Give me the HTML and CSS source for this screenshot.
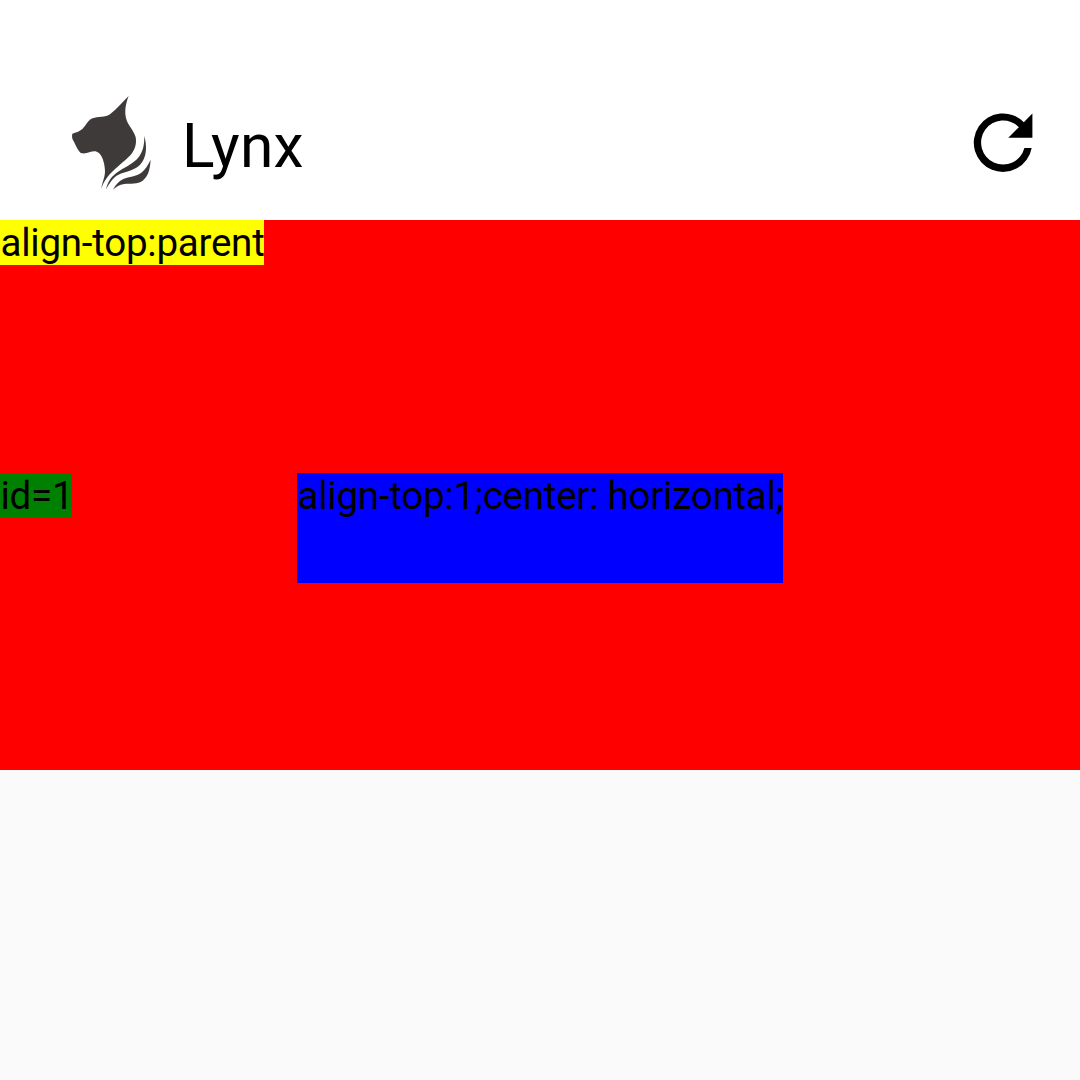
FILE: index.html
```html
<!DOCTYPE html>
<html lang="en">
<head>
<meta charset="utf-8">
<title>Lynx</title>
<link rel="stylesheet" href="styles.css">
</head>
<body>
<header class="toolbar">
  <svg class="logo" viewBox="0 0 300 345" aria-hidden="true">
    <path d="M206 33C197 56 193 78 198 99C203 121 222 136 227 157C231 179 223 200 208 214C184 239 136 268 124 312C126 292 135 279 135 258C134 235 127 206 110 200C96 196 84 207 66 205C57 203 48 183 42 170C36 162 35 154 37 146C48 142 58 140 68 131C78 122 83 105 98 100C113 94 136 98 151 87C171 72 190 49 206 33Z"/>
    <path d="M253 153C260 179 261 207 248 229C231 258 197 258 174 270C159 278 149 294 138 313C143 292 152 278 168 265C191 246 219 239 237 215C251 196 253 175 253 153Z"/>
    <path d="M272 224C270 246 268 271 248 287C232 299 212 294 193 297C178 299 168 306 159 314C167 300 175 289 190 282C207 274 229 275 244 263C257 253 264 239 272 224Z"/>
  </svg>
  <h1 class="title">Lynx</h1>
  <svg class="refresh" viewBox="0 0 88 88" role="img" aria-label="Refresh">
    <path d="M73.4 14.6V38.7H49.3L59.9 28.2A22 22 0 1 0 65.4 49H72.7A29.2 29.2 0 1 1 64.8 23.2Z"/>
  </svg>
</header>
<main class="stage">
  <div class="label parent-top">align-top:parent</div>
  <div class="row">
    <div class="label anchor">id=1</div>
    <div class="label centered">align-top:1;center: horizontal;</div>
  </div>
</main>
</body>
</html>
```
FILE: styles.css
```css
* {
  box-sizing: border-box;
}

body {
  margin: 0;
  min-height: 100vh;
  background: #fafafa;
  color: #000;
  font-family: Roboto, sans-serif;
}

.toolbar {
  display: flex;
  align-items: flex-start;
  height: 220px;
  padding: 85px 33px 0 60px;
  background: #fff;
}

.logo {
  width: 100px;
  height: 115px;
  fill: #3e3a39;
}

.title {
  margin: 26px 0 0 22px;
  font-size: 60.5px;
  font-weight: 400;
  line-height: 71px;
  letter-spacing: 0.3px;
}

.refresh {
  width: 88px;
  height: 88px;
  margin: 14px 0 0 auto;
}

.stage {
  display: flex;
  flex-direction: column;
  align-items: flex-start;
  height: 550px;
  background: #f00;
}

.label {
  padding-left: 0.5px;
  font-size: 38.5px;
  line-height: 45px;
  letter-spacing: -0.24px;
  white-space: nowrap;
}

.parent-top {
  width: 264px;
  height: 45px;
  background: #ff0;
}

.row {
  display: grid;
  grid-template-columns: 1fr auto 1fr;
  align-items: start;
  width: 100%;
  margin-top: 208px;
}

.anchor {
  justify-self: start;
  width: 72px;
  height: 45px;
  background: #008000;
}

.centered {
  width: 486px;
  height: 110px;
  background: #00f;
}
```
